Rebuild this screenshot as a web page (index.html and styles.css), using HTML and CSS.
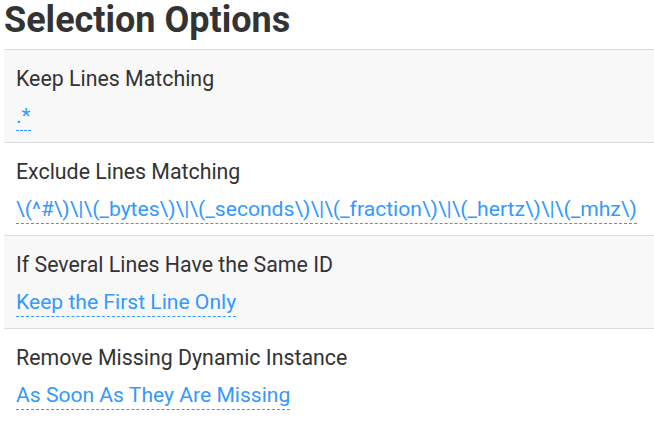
FILE: index.html
```html
<!DOCTYPE html>
<html>
<head>
<meta charset="utf-8">
<link rel="stylesheet" href="styles.css">
</head>
<body>
<h1 class="title">Selection Options</h1>
<div class="options">
  <div class="row alt">
    <div class="label">Keep Lines Matching</div>
    <div class="value"><span class="link">.*</span></div>
  </div>
  <div class="row">
    <div class="label">Exclude Lines Matching</div>
    <div class="value"><span class="link">\(^#\)\|\(_bytes\)\|\(_seconds\)\|\(_fraction\)\|\(_hertz\)\|\(_mhz\)</span></div>
  </div>
  <div class="row alt">
    <div class="label">If Several Lines Have the Same ID</div>
    <div class="value"><span class="link">Keep the First Line Only</span></div>
  </div>
  <div class="row last">
    <div class="label">Remove Missing Dynamic Instance</div>
    <div class="value"><span class="link">As Soon As They Are Missing</span></div>
  </div>
</div>
</body>
</html>
```
FILE: styles.css
```css
html, body {
  margin: 0;
  padding: 0;
  background: #fff;
}
body {
  font-family: Roboto, "Liberation Sans", sans-serif;
  color: #333;
  padding-left: 4px;
  overflow: hidden;
}
.title {
  margin: 0;
  height: 49px;
  font-size: 36px;
  font-weight: 700;
  line-height: 41px;
  color: #333;
}
.options {
  border-top: 1px solid #ddd;
}
.row {
  height: 92px;
  border-bottom: 1px solid #ddd;
  padding: 0 12px;
  box-sizing: content-box;
  white-space: nowrap;
}
.row.last {
  border-bottom: none;
}
.row.alt {
  background: #f8f8f8;
}
.label {
  font-size: 21.33px;
  line-height: 25px;
  padding-top: 16px;
  color: #333;
}
.value {
  margin-top: 12px;
  font-size: 21.1px;
  line-height: 25px;
}
.link {
  color: #3399ff;
  border-bottom: 1px dashed #3399ff;
  padding-bottom: 2px;
}
```
